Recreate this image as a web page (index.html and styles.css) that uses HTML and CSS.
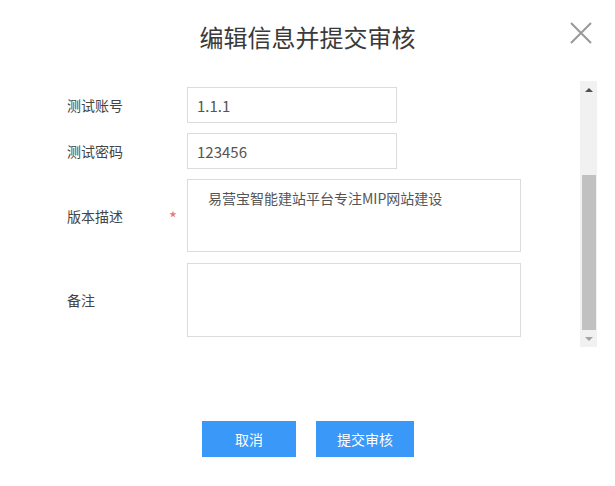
FILE: index.html
```html
<!DOCTYPE html>
<html lang="zh-CN">
<head>
<meta charset="utf-8">
<title>编辑信息并提交审核</title>
<link rel="stylesheet" href="styles.css">
</head>
<body>
<div class="dialog">
  <div class="header">
    <h1 class="title">编辑信息并提交审核</h1>
    <button class="close" aria-label="关闭">
      <svg width="22" height="22" viewBox="0 0 22 22"><path d="M1 1 L21 21 M21 1 L1 21" stroke="#999" stroke-width="2" fill="none"/></svg>
    </button>
  </div>
  <div class="body">
    <div class="form">
      <div class="row">
        <div class="label">测试账号</div>
        <input class="input" type="text" value="1.1.1">
      </div>
      <div class="row">
        <div class="label">测试密码</div>
        <input class="input" type="text" value="123456">
      </div>
      <div class="row">
        <div class="label">版本描述<span class="star">*</span></div>
        <textarea class="textarea">易营宝智能建站平台专注MIP网站建设</textarea>
      </div>
      <div class="row row-last">
        <div class="label">备注</div>
        <textarea class="textarea tall"></textarea>
      </div>
    </div>
    <div class="scrollbar">
      <div class="sb-btn"><span class="arrow-up"></span></div>
      <div class="sb-track"><div class="sb-thumb"></div></div>
      <div class="sb-btn"><span class="arrow-down"></span></div>
    </div>
  </div>
  <div class="footer">
    <button class="btn btn-cancel">取消</button>
    <button class="btn btn-submit">提交审核</button>
  </div>
</div>
</body>
</html>
```
FILE: styles.css
```css
* { box-sizing: border-box; }
html, body { margin: 0; padding: 0; background: #fff; }
body {
  font-family: "Noto Sans CJK SC", "Microsoft YaHei", sans-serif;
  color: #333;
  width: 615px;
  height: 486px;
  overflow: hidden;
}
.dialog { position: relative; width: 615px; height: 486px; }
.header {
  height: 81px;
  display: flex;
  justify-content: center;
  padding-top: 21px;
}
.title {
  margin: 0;
  font-size: 24px;
  font-weight: normal;
  line-height: 32px;
  color: #3a3a3a;
}
.close {
  position: absolute;
  top: 22px;
  left: 570px;
  width: 22px;
  height: 22px;
  padding: 0;
  border: 0;
  background: none;
  display: block;
}
.close svg { display: block; }
.body {
  height: 266px;
  display: flex;
  padding-right: 18px;
}
.form {
  flex: 1;
  padding-left: 67px;
  padding-top: 6px;
  display: flex;
  flex-direction: column;
  gap: 10px;
}
.row { display: flex; align-items: center; }
.row-last { margin-top: 1px; }
.label {
  width: 120px;
  flex: none;
  font-size: 14px;
  line-height: 20px;
  color: #444;
  display: flex;
  align-items: center;
}
.star {
  color: #f07070;
  font-size: 17px;
  margin-left: auto;
  margin-right: 10px;
  line-height: 14px;
  padding-top: 5px;
}
.input {
  width: 210px;
  height: 36px;
  border: 1px solid #dcdcdc;
  padding: 0 9px;
  font-family: "Noto Sans CJK SC", sans-serif;
  font-size: 15px;
  color: #555;
  outline: none;
  margin: 0;
}
.textarea {
  width: 334px;
  height: 73px;
  border: 1px solid #dcdcdc;
  padding: 8px 20px;
  font-family: "Noto Sans CJK SC", sans-serif;
  font-size: 14px;
  line-height: 20px;
  color: #555;
  resize: none;
  outline: none;
  margin: 0;
  display: block;
}
.textarea.tall { height: 74px; }
.scrollbar {
  width: 17px;
  flex: none;
  background: #f1f1f1;
  display: flex;
  flex-direction: column;
}
.sb-btn {
  height: 17px;
  flex: none;
  display: flex;
  align-items: center;
  justify-content: center;
}
.arrow-up {
  width: 0; height: 0;
  border-left: 4px solid transparent;
  border-right: 4px solid transparent;
  border-bottom: 4px solid #505050;
}
.arrow-down {
  width: 0; height: 0;
  border-left: 4px solid transparent;
  border-right: 4px solid transparent;
  border-top: 4px solid #a3a3a3;
}
.sb-track {
  flex: 1;
  display: flex;
  flex-direction: column;
  justify-content: flex-end;
  padding: 0 1px 0 2px;
}
.sb-thumb {
  height: 155px;
  background: #c1c1c1;
}
.footer {
  margin-top: 74px;
  display: flex;
  justify-content: center;
  gap: 20px;
  padding-left: 1px;
}
.btn {
  height: 36px;
  border: 0;
  background: #3a98f8;
  color: #fff;
  font-family: "Noto Sans CJK SC", sans-serif;
  font-size: 14px;
  padding: 0;
  margin: 0;
}
.btn-cancel { width: 94px; }
.btn-submit { width: 98px; }
```
